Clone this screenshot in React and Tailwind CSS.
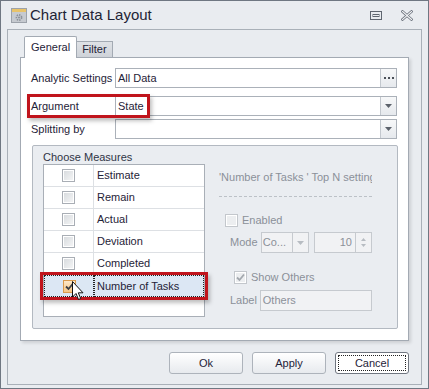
import React from 'react'

const font = "font-['Liberation_Sans',Arial,sans-serif]"

function WinIcon() {
  return (
    <svg width="16" height="15" viewBox="0 0 16 15">
      <rect x="0.5" y="0.5" width="15" height="14" fill="#c6cad0" stroke="#9ca2aa" />
      <rect x="1" y="1" width="14" height="3" fill="#e8c36a" />
      <circle cx="8" cy="9.5" r="2.6" fill="none" stroke="#8a9098" strokeWidth="1.6" strokeDasharray="1.4 1" />
      <circle cx="8" cy="9.5" r="1" fill="#8a9098" />
    </svg>
  )
}

function RestoreIcon() {
  return (
    <svg width="12" height="9" viewBox="0 0 12 9">
      <rect x="0.5" y="0.5" width="11" height="8" fill="none" stroke="#5f6670" />
      <rect x="3" y="3.5" width="6" height="2" fill="none" stroke="#5f6670" />
    </svg>
  )
}

function CloseIcon() {
  return (
    <svg width="12" height="11" viewBox="0 0 12 11">
      <path d="M1.5 1.5 L10.5 9.5 M10.5 1.5 L1.5 9.5" stroke="#6a717b" strokeWidth="2.6" strokeLinecap="square" />
      <path d="M1.5 1.5 L10.5 9.5 M10.5 1.5 L1.5 9.5" stroke="#f4f5f7" strokeWidth="1.1" strokeLinecap="square" />
    </svg>
  )
}

function Arrow({ color = '#5c626b' }) {
  return (
    <svg width="7" height="4" viewBox="0 0 7 4">
      <path d="M0 0 H7 L3.5 4 Z" fill={color} />
    </svg>
  )
}

function Check({ color = '#3b3f45' }) {
  return (
    <svg width="9" height="9" viewBox="0 0 9 9">
      <path d="M1 4.5 L3.5 7 L8 1.5" fill="none" stroke={color} strokeWidth="1.8" />
    </svg>
  )
}

function Box({ checked, orange, disabled }) {
  if (orange) {
    return (
      <div className="w-[13px] h-[13px] border border-[#d99a4e] bg-gradient-to-b from-[#fde8c8] to-[#f5c584] flex items-center justify-center">
        <Check />
      </div>
    )
  }
  return (
    <div className={`w-[13px] h-[13px] border ${disabled ? 'border-[#c3c7cc]' : 'border-[#a9aeb5]'} bg-white p-[1px]`}>
      <div className={`w-full h-full ${disabled ? 'bg-[#eceef0]' : 'bg-gradient-to-br from-[#d9dcdf] to-[#f3f4f5]'} flex items-center justify-center`}>
        {checked && <Check color="#a3a8ae" />}
      </div>
    </div>
  )
}

function Field({ value, button }) {
  return (
    <div className="flex-1 h-[20px] border border-[#abb1b9] bg-white flex">
      <div className="flex-1 pl-[2px] flex items-center text-[11px] text-[#1f2338]">{value}</div>
      <div className="w-[16px] border-l border-[#c3c8ce] bg-gradient-to-b from-[#f7f8f9] to-[#e6e9ed] flex items-center justify-center">
        {button === 'dots' ? (
          <div className="flex gap-[2px]">
            <span className="w-[2px] h-[2px] bg-[#4a4f57]" />
            <span className="w-[2px] h-[2px] bg-[#4a4f57]" />
            <span className="w-[2px] h-[2px] bg-[#4a4f57]" />
          </div>
        ) : (
          <Arrow />
        )}
      </div>
    </div>
  )
}

const measures = ['Estimate', 'Remain', 'Actual', 'Deviation', 'Completed']

export default function App() {
  return (
    <div className={`relative w-[429px] h-[389px] bg-[#e9ecf0] border border-[#6f7782] flex flex-col ${font} text-[11px] text-[#1f2338]`}>
      {/* Title bar */}
      <div className="h-[28px] flex items-center pl-[10px] pr-[15px]">
        <WinIcon />
        <span className="ml-[3px] text-[15px] text-[#1e2436]">Chart Data Layout</span>
        <div className="flex-1" />
        <RestoreIcon />
        <div className="ml-[19px]"><CloseIcon /></div>
      </div>

      {/* Frame */}
      <div className="mx-[6px] h-[356px] border border-[#a9b0b8] flex flex-col">
        <div className="h-[27px] pl-[16px] flex items-end">
          <div className="h-[22px] px-[6px] bg-white border border-b-0 border-[#a3aab3] rounded-t-[2px] flex items-center relative z-10 -mb-px">General</div>
          <div className="h-[16px] px-[5px] bg-gradient-to-b from-[#dfe2e6] to-[#cfd3d9] border border-l-0 border-b-0 border-[#a3aab3] flex items-center">Filter</div>
        </div>

        {/* Tab page */}
        <div className="mx-[12px] h-[284px] bg-white border border-[#a3aab3] shadow-[2px_2px_3px_rgba(0,0,0,0.12)] flex flex-col">
          <div className="mt-[10px] flex items-center pr-[11px]">
            <div className="w-[94px] pl-[10px]">Analytic Settings</div>
            <Field value="All Data" button="dots" />
          </div>
          <div className="mt-[8px] flex items-center pr-[11px]">
            <div className="w-[94px] pl-[10px]">Argument</div>
            <Field value="State" />
          </div>
          <div className="mt-[3px] flex items-center pr-[11px]">
            <div className="w-[94px] pl-[10px]">Splitting by</div>
            <Field value="" />
          </div>

          {/* Group box */}
          <div className="mt-[6px] ml-[11px] mr-[10px] h-[184px] border border-[#b3b9c1] rounded-[2px] bg-[#eaedf1] flex flex-col">
            <div className="pt-[3px] pl-[10px] h-[18px] text-[#2f3445]">Choose Measures</div>
            <div className="flex">
              <div className="ml-[10px] w-[162px] h-[153px] border border-[#a9afb7] bg-white flex flex-col">
                {measures.map(m => (
                  <div key={m} className="h-[22px] border-b border-[#dde0e4] flex">
                    <div className="w-[50px] border-r border-[#dde0e4] flex items-center justify-center">
                      <Box />
                    </div>
                    <div className="flex-1 pl-[3px] flex items-center">{m}</div>
                  </div>
                ))}
                <div className="h-[22px] bg-[#dce7f4] flex">
                  <div className="w-[50px] border border-dotted border-[#222] flex items-center justify-center">
                    <Box orange />
                  </div>
                  <div className="flex-1 pl-[2px] border border-dotted border-[#222] flex items-center">Number of Tasks</div>
                </div>
              </div>

              {/* Top N settings */}
              <div className="ml-[14px] w-[153px] flex flex-col text-[#8b9099]">
                <div className="mt-[7px] h-[13px] leading-[13px] whitespace-nowrap overflow-hidden">'Number of Tasks ' Top N setting</div>
                <div className="mt-[12px] border-t border-dashed border-[#bcc1c7]" />
                <div className="mt-[17px] h-[13px] pl-[6px] flex items-center gap-[4px]">
                  <Box disabled />
                  <span>Enabled</span>
                </div>
                <div className="mt-[5px] h-[21px] flex items-center">
                  <div className="w-[42px] pl-[11px]">Mode</div>
                  <div className="w-[49px] h-[21px] border border-[#c6cacf] bg-[#f1f2f4] flex">
                    <div className="flex-1 pl-[1px] flex items-center">Co...</div>
                    <div className="w-[16px] border-l border-[#c6cacf] flex items-center justify-center"><Arrow color="#b7bcc2" /></div>
                  </div>
                  <div className="ml-[5px] w-[58px] h-[21px] border border-[#c6cacf] bg-[#f1f2f4] flex">
                    <div className="flex-1 pr-[3px] flex items-center justify-end">10</div>
                    <div className="w-[16px] border-l border-[#c6cacf] flex flex-col items-center justify-center gap-[3px]">
                      <svg width="5" height="3" viewBox="0 0 5 3"><path d="M0 3 L2.5 0 L5 3 Z" fill="#b7bcc2" /></svg>
                      <svg width="5" height="3" viewBox="0 0 5 3"><path d="M0 0 H5 L2.5 3 Z" fill="#b7bcc2" /></svg>
                    </div>
                  </div>
                </div>
                <div className="mt-[18px] h-[13px] pl-[15px] flex items-center gap-[4px]">
                  <Box disabled checked />
                  <span>Show Others</span>
                </div>
                <div className="mt-[6px] h-[21px] flex items-center">
                  <div className="w-[41px] pl-[11px]">Label</div>
                  <div className="w-[113px] h-[21px] border border-[#c6cacf] bg-[#f1f2f4] pl-[2px] flex items-center">Others</div>
                </div>
              </div>
            </div>
          </div>
        </div>

        {/* Buttons */}
        <div className="mt-[11px] h-[22px] pr-[12px] flex justify-end gap-[9px]">
          <button className="w-[74px] h-[22px] rounded-[3px] border border-[#adb3bb] bg-gradient-to-b from-white to-[#e7eaee] text-[#1f2338]">Ok</button>
          <button className="w-[74px] h-[22px] rounded-[3px] border border-[#adb3bb] bg-gradient-to-b from-white to-[#e7eaee] text-[#1f2338]">Apply</button>
          <button className="w-[74px] h-[22px] rounded-[3px] border border-[#707680] bg-white p-[2px] text-[#1f2338]">
            <div className="w-full h-full border border-dotted border-[#222] flex items-center justify-center">Cancel</div>
          </button>
        </div>
      </div>

      {/* Highlight overlays */}
      <div className="absolute left-[26px] top-[93px] w-[123px] h-[24px] border-[3px] border-[#c0141c] shadow-[2px_3px_4px_rgba(0,0,0,0.25)]" />
      <div className="absolute left-[39px] top-[271px] w-[168px] h-[28px] border-[3px] border-[#c0141c] shadow-[2px_3px_4px_rgba(0,0,0,0.25)]" />
      <svg className="absolute left-[71px] top-[280px]" width="13" height="20" viewBox="0 0 13 20">
        <path d="M0.5 0.5 L0.5 16 L4 12.5 L6.5 18.5 L8.7 17.5 L6.3 11.8 L11 11.8 Z" fill="#fff" stroke="#111" strokeWidth="1" strokeLinejoin="round" />
      </svg>
    </div>
  )
}
